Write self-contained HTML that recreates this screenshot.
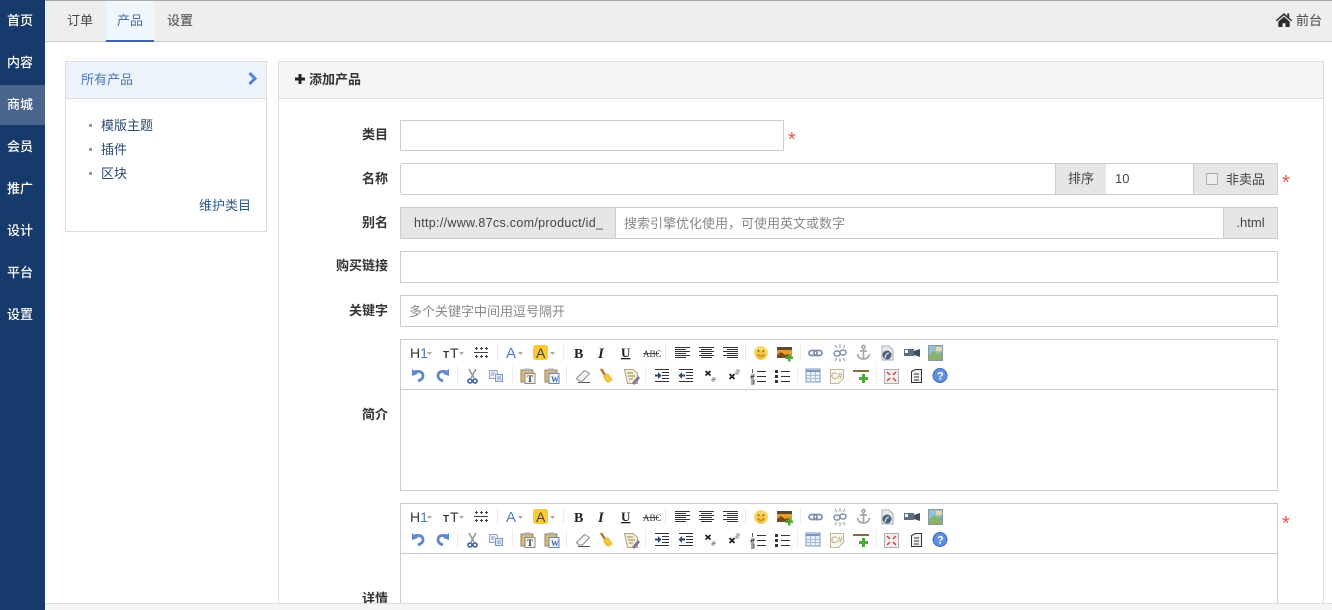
<!DOCTYPE html>
<html lang="zh"><head><meta charset="utf-8"><title>添加产品</title>
<style>
*{box-sizing:border-box}
html,body{margin:0;padding:0;width:1332px;height:610px;overflow:hidden;background:#fff}
body{font:13px/18px "Liberation Sans","Noto Sans CJK SC",sans-serif;color:#333;position:relative}
.a{position:absolute;white-space:nowrap}
#side{left:0;top:0;width:45px;height:610px;background:#173a6c}
.nav{position:absolute;left:0;width:45px;height:40px;line-height:42px;padding-left:7px;color:#fff;font-weight:500;font-size:13px}
#top{left:0;top:0;width:1332px;height:42px;background:#eee;border-top:1px solid #aaa;border-bottom:1px solid #ccc}
.lb{position:absolute;width:100px;left:288px;text-align:right;font-weight:bold;color:#333}
.box{position:absolute;background:#fff;border:1px solid #ccc}
.add{position:absolute;background:#e6e6e6;border:1px solid #ccc;text-align:center;color:#444}
.star{position:absolute;color:#e0584c;font-size:20px;font-weight:normal}
svg text{font-family:"Liberation Sans",sans-serif}
</style></head><body>
<div class="a" id="top"></div>
<div class="a" id="side"></div>
<div class="a" style="left:0;top:85px;width:45px;height:40px;background:#4b648c"></div>
<div class="nav" style="top:0">首页</div><div class="nav" style="top:42px">内容</div><div class="nav" style="top:84px">商城</div><div class="nav" style="top:126px">会员</div><div class="nav" style="top:168px">推广</div><div class="nav" style="top:210px">设计</div><div class="nav" style="top:252px">平台</div><div class="nav" style="top:294px">设置</div>

<div class="a" style="left:106px;top:1px;width:48px;height:41px;background:#eff6fc;border-bottom:2px solid #3a66a8"></div>
<div class="a" style="left:67px;top:12px;color:#444">订单</div>
<div class="a" style="left:117px;top:12px;color:#3d6fb0">产品</div>
<div class="a" style="left:167px;top:12px;color:#444">设置</div>
<svg class="a" style="left:1275px;top:12px" width="18" height="16" viewBox="0 0 18 16"><path fill="#2e2e2e" d="M9 1 .8 8.2l1 1.1L9 3.2l7.2 6.1 1-1.1-3-2.6V1.5h-2v2.6zM3.3 9.6V15h4.2v-3.8h3V15h4.2V9.6L9 4.6z"/></svg>
<div class="a" style="left:1296px;top:12px;color:#444">前台</div>

<div class="a" style="left:65px;top:61px;width:202px;height:171px;border:1px solid #ddd;background:#fff"></div>
<div class="a" style="left:66px;top:62px;width:200px;height:37px;background:#edf3fb;border-bottom:1px solid #ddd"></div>
<div class="a" style="left:81px;top:71px;color:#4a76c4">所有产品</div>
<svg class="a" style="left:247px;top:71px" width="12" height="15" viewBox="0 0 12 15"><path fill="none" stroke="#4f82d8" stroke-width="3" d="M2.500 2 8 7.500 2.500 13"/></svg>
<div class="a" style="left:89px;top:124px;width:3px;height:3px;background:#999"></div>
<div class="a" style="left:89px;top:148px;width:3px;height:3px;background:#999"></div>
<div class="a" style="left:89px;top:172px;width:3px;height:3px;background:#999"></div>
<div class="a" style="left:101px;top:117px;color:#2b4a70">模版主题</div>
<div class="a" style="left:101px;top:141px;color:#2b4a70">插件</div>
<div class="a" style="left:101px;top:165px;color:#2b4a70">区块</div>
<div class="a" style="left:199px;top:197px;color:#2b5a8a">维护类目</div>

<div class="a" style="left:278px;top:61px;width:1046px;height:560px;border:1px solid #ddd;background:#fff"></div>
<div class="a" style="left:279px;top:62px;width:1044px;height:37px;background:#f5f5f5;border-bottom:1px solid #ddd"></div>
<svg class="a" style="left:294px;top:73px" width="12" height="12" viewBox="0 0 12 12"><path fill="#222" d="M4.500 1h3v3.500H11v3H7.500V11h-3V7.500H1v-3h3.500z"/></svg>
<div class="a" style="left:309px;top:71px;font-weight:bold;color:#333">添加产品</div>

<div class="lb" style="top:126px">类目</div>
<div class="box" style="left:400px;top:120px;width:384px;height:31px"></div>
<div class="star" style="left:788px;top:131px">*</div>

<div class="lb" style="top:170px">名称</div>
<div class="box" style="left:400px;top:163px;width:656px;height:32px;border-radius:3px 0 0 3px"></div>
<div class="add" style="left:1055px;top:163px;width:52px;height:32px;line-height:30px">排序</div>
<div class="box" style="left:1106px;top:163px;width:88px;height:32px;line-height:30px;padding-left:9px;border-left:0;border-right:0;color:#444">10</div>
<div class="add" style="left:1193px;top:163px;width:85px;height:32px"></div>
<div class="a" style="left:1206px;top:173px;width:12px;height:12px;border:1px solid #aaa;border-radius:2px;background:#efefef"></div>
<div class="a" style="left:1226px;top:171px;color:#444">非卖品</div>
<div class="star" style="left:1282px;top:174px">*</div>

<div class="lb" style="top:214px">别名</div>
<div class="add" style="left:400px;top:207px;width:216px;height:32px;line-height:30px;letter-spacing:.3px;font-size:12.500px;text-align:left;padding-left:13px">http://www.87cs.com/product/id_</div>
<div class="box" style="left:615px;top:207px;width:609px;height:32px;line-height:32px;padding-left:8px;color:#888">搜索引擎优化使用，可使用英文或数字</div>
<div class="add" style="left:1223px;top:207px;width:55px;height:32px;line-height:30px">.html</div>

<div class="lb" style="top:257px">购买链接</div>
<div class="box" style="left:400px;top:251px;width:878px;height:32px"></div>

<div class="lb" style="top:302px">关键字</div>
<div class="box" style="left:400px;top:295px;width:878px;height:32px;line-height:32px;padding-left:8px;color:#888">多个关键字中间用逗号隔开</div>

<div class="lb" style="top:406px">简介</div>
<div class="box" style="left:400px;top:339px;width:878px;height:152px"></div>
<div class="a" style="left:401px;top:389px;width:876px;height:1px;background:#ccc"></div>

<div class="box" style="left:400px;top:503px;width:878px;height:130px"></div>
<div class="a" style="left:401px;top:553px;width:876px;height:1px;background:#ccc"></div>
<div class="star" style="left:1282px;top:515px">*</div>
<div class="lb" style="top:590px">详情</div>

<svg class="a" style="left:400px;top:339px" width="560" height="50" viewBox="0 0 560 50">
<defs>
<g id="tb">
<!-- separators -->
<path fill="none" stroke="#ececec" d="M97.500 5v17M163.500 5v17M265.500 5v17M345.500 5v17M400.500 5v17M57.500 27v17M112.500 27v17M166.500 27v17M245.500 27v17M397.500 27v17M476.500 27v17"/>
<!-- carets -->
<path fill="#aaa" d="M27 13h5l-2.500 3zM59 13h5l-2.500 3zM118 13h5l-2.500 3zM150 13h5l-2.500 3z"/>
<!-- grid -->
<path fill="none" stroke="#444" d="M74 13.500h14"/>
<path fill="none" stroke="#444" d="M75 9.500h3M80 9.500h3M85 9.500h3M75 17.500h3M80 17.500h3M85 17.500h3M76.500 8v3M81.500 8v3M86.500 8v3M76.500 16v3M81.500 16v3M86.500 16v3"/>
<rect x="133" y="6" width="15" height="15" rx="2.500" fill="#fbcb34"/>
<!-- ABC strike -->
<path stroke="#666" d="M243 14.500h16"/>
<!-- aligns -->
<g fill="none" stroke="#333"><path d="M275 8.500h15M275 10.500h11M275 12.500h15M275 14.500h11M275 16.500h15M275 18.500h11M299 8.500h15M301 10.500h11M299 12.500h15M301 14.500h11M299 16.500h15M301 18.500h11M323 8.500h15M327 10.500h11M323 12.500h15M327 14.500h11M323 16.500h15M327 18.500h11"/></g>
<!-- smile -->
<circle cx="361" cy="14" r="7" fill="#f8d766"/><circle cx="361" cy="16" r="4.500" fill="#f5c445"/><circle cx="358.500" cy="12" r="1" fill="#8a6a1a"/><circle cx="363.500" cy="12" r="1" fill="#8a6a1a"/><path d="M357.500 15.500q3.500 3.500 7 0" fill="none" stroke="#a8781a"/>
<!-- emoticon image -->
<rect x="377" y="8" width="15" height="3" fill="#5c4a2a"/><rect x="377" y="11" width="15" height="8" fill="#e89a2a"/><path d="M377 19v-3l4-3 4 3 3-1v4z" fill="#7a4a18"/><path d="M388 15h2.500v2.500H393V20h-2.500v2.500H388V20h-2.500v-2.500H388z" fill="#4fa83a"/>
<!-- link -->
<g fill="none" stroke="#7d8fa8" stroke-width="1.800"><rect x="409" y="11.500" width="8" height="5" rx="2.500"/><rect x="414" y="11.500" width="8" height="5" rx="2.500"/></g>
<!-- unlink -->
<g fill="none" stroke="#7d8fa8" stroke-width="1.500"><rect x="434" y="12" width="6" height="5" rx="2.500"/><rect x="440" y="11" width="6" height="5" rx="2.500"/></g>
<path fill="none" stroke="#8a94a0" d="M435 6l2 3M440 5v4M445 6l-2 3M435 22l2-3M440 23v-4M445 22l-2-3"/>
<!-- anchor -->
<g fill="none" stroke="#a4a8ac" stroke-width="1.700"><circle cx="463.500" cy="8" r="1.500"/><path d="M463.500 10v10M460 12h7M457.500 15q1 5 6 5 5 0 6-5"/></g>
<!-- flash -->
<path d="M482 7h7l4 4v10h-11z" fill="#e8eaec" stroke="#a4acb4"/><circle cx="487" cy="16" r="4.500" fill="#4d627c"/><path d="M485 19q1-5 4-5" stroke="#fff" fill="none"/>
<!-- video -->
<path d="M504 10h10v7h-10z" fill="#5c6f80"/><path d="M514 12l6-2v8l-6-2z" fill="#3f4e5c"/><rect x="505" y="11" width="3" height="3" fill="#fff"/>
<!-- image -->
<rect x="528.500" y="6.500" width="14" height="15" fill="#8fc1da" stroke="#8a98a4"/><path d="M529 21v-5l5-4 4 3 4-2v8z" fill="#8ab36a"/><rect x="536" y="8" width="6" height="4" fill="#e6d9a0"/>

<!-- ROW 2 undo/redo -->
<g fill="none" stroke="#6288cc" stroke-width="2.800"><path d="M14 33q8-2 9 3 .5 4-5 6"/><path d="M47 33q-8-2-9 3-.5 4 5 6"/></g>
<path fill="#6288cc" d="M12 30v7l6-2zM49 30v7l-6-2z"/>
<!-- cut -->
<path fill="none" stroke="#8a94a4" stroke-width="1.500" d="M69 30l5 9M76 30l-5 9"/><g fill="none" stroke="#4f6ba8" stroke-width="1.800"><circle cx="70" cy="42" r="2"/><circle cx="75" cy="42" r="2"/></g>
<!-- copy -->
<path d="M89.500 31.500h7l1 1v7h-8z" fill="#eef3fb" stroke="#8aa4d0"/><path d="M95.500 35.500h7v7h-7z" fill="#dfe9f7" stroke="#7e9ac8"/><path d="M91 34h4M91 36h3M97 38h4M97 40h4" stroke="#7e9ac8"/>
<!-- paste T/W -->
<rect x="121" y="31" width="12" height="12" fill="#d9b878" stroke="#9a8250"/><rect x="124" y="29.500" width="6" height="3" fill="#b0b0b0"/><rect x="125" y="34.500" width="10" height="10" fill="#f4f4f4" stroke="#888"/>
<rect x="145" y="31" width="12" height="12" fill="#d9b878" stroke="#9a8250"/><rect x="148" y="29.500" width="6" height="3" fill="#b0b0b0"/><rect x="149" y="34.500" width="10" height="10" fill="#f0f4fb" stroke="#6a86c0"/>
<!-- eraser -->
<path d="M176.500 39.500l8-8 5 3-7 7.500h-3.500z" fill="#f6f6f6" stroke="#8a8a8a"/><path d="M178 43.500h12" stroke="#555"/>
<!-- brush -->
<path d="M201 30l4 6" stroke="#b8701e" stroke-width="2.400"/><path d="M203 37l5-3 5 7-5 3q-4-2-5-7z" fill="#f0c63e"/>
<!-- format -->
<path d="M224.500 30.500h9l4 4v10h-10z" fill="#f8efc8" stroke="#a8a490"/><path d="M227 34h6M228 37h7M229 40h4" stroke="#8a8a7a"/><path d="M232 44l6-7 2 2-6 7z" fill="#8070a8"/>
<!-- indent / outdent -->
<path fill="none" stroke="#333" d="M255 30.500h14M262 33.500h7M262 36.500h7M262 39.500h7M255 42.500h14M279 30.500h14M286 33.500h7M286 36.500h7M286 39.500h7M279 42.500h14"/>
<path fill="#2a4a70" d="M255 35.500h3v-2.500l3.500 3.500-3.500 3.500v-2.500h-3zM285 35.500h-3v-2.500l-3.500 3.500 3.500 3.500v-2.500h3z"/>
<!-- sub/sup -->
<path fill="none" stroke="#222" stroke-width="1.800" d="M305.500 32l5 4.500M310.500 32l-5 4.500M329.500 35l5 5M334.500 35l-5 5"/>
<path fill="none" stroke="#888" d="M312 39h3v1.500h-3V42h3M336 31h3v2h-3v2h3"/>
<!-- ol/ul -->
<path fill="none" stroke="#333" d="M357 32.500h9M357 37.500h9M357 42.500h9M381 32.500h9M381 37.500h9M381 42.500h9"/>
<path fill="none" stroke="#444" stroke-width=".9" d="M352.500 30v4M351 36h3v1.500h-3V39h3M351 41h3v4h-3M351 43h3"/>
<path fill="#333" d="M375 31h3v3h-3zM375 36h3v3h-3zM375 41h3v3h-3z"/>
<!-- table -->
<rect x="406" y="30" width="14" height="13" fill="#e8f0fa" stroke="#7a98c0"/><path d="M406.500 32h13" stroke="#7a98c0" stroke-width="2"/><path d="M406 36.500h14M406 39.500h14M410.500 33v10M415.500 33v10" stroke="#a8bdd8"/>
<!-- code -->
<path d="M430.500 30.500h13v9l-5 5h-8z" fill="#faf7ee" stroke="#c0b898"/>
<!-- hr -->
<path d="M453 32h16" stroke="#8a6a3a" stroke-width="2"/><path d="M459 38h3v-3h3v3h3v3h-3v3h-3v-3h-3z" fill="#4fa83a"/>
<!-- fullscreen -->
<rect x="484.500" y="30.500" width="14" height="14" fill="#f6ecec" stroke="#b0b0b0"/><path d="M487 33l3 3M496 33l-3 3M487 42l3-3M496 42l-3-3" stroke="#c44" stroke-width="1.500"/>
<!-- source -->
<path d="M511.500 32.500l4-2h6v13h-10z" fill="#f0f0f0" stroke="#333"/><path d="M514 35h5M514 38h5M514 41h5" stroke="#333"/>
<!-- help -->
<circle cx="540" cy="36.500" r="7" fill="#5f8fe0" stroke="#3d6bb8"/>
</g>
</defs>
<use href="#tb"/>
<text x="10" y="19" font-size="14" fill="#333">H<tspan fill="#4a76b8">1</tspan></text>
<text x="43" y="19" font-size="10" fill="#333" font-weight="bold">T</text><text x="50" y="19" font-size="14" fill="#333">T</text>
<text x="106" y="19" font-size="15" fill="#4a7fc8">A</text>
<text x="136" y="19" font-size="14" fill="#444">A</text>
<text x="174" y="19" font-size="14" font-weight="bold" fill="#222" style="font-family:'Liberation Serif',serif">B</text>
<text x="198" y="19" font-size="15" font-weight="bold" font-style="italic" fill="#222" style="font-family:'Liberation Serif',serif">I</text>
<text x="221" y="18" font-size="13" font-weight="bold" fill="#222" text-decoration="underline" style="font-family:'Liberation Serif',serif">U</text>
<text x="243" y="18" font-size="9" fill="#333" style="font-family:'Liberation Serif',serif">ABC</text>
<text x="127" y="43" font-size="9" font-weight="bold" fill="#333" style="font-family:'Liberation Serif',serif">T</text>
<text x="151" y="43" font-size="8" font-weight="bold" fill="#3a5fb0" style="font-family:'Liberation Serif',serif">W</text>
<text x="431" y="40" font-size="9" fill="#a89a70">C#</text>
<text x="537" y="40.500" font-size="11" font-weight="bold" fill="#fff">?</text>
</svg>

<svg class="a" style="left:400px;top:503px" width="560" height="50" viewBox="0 0 560 50">
<use href="#tb"/>
<text x="10" y="19" font-size="14" fill="#333">H<tspan fill="#4a76b8">1</tspan></text>
<text x="43" y="19" font-size="10" fill="#333" font-weight="bold">T</text><text x="50" y="19" font-size="14" fill="#333">T</text>
<text x="106" y="19" font-size="15" fill="#4a7fc8">A</text>
<text x="136" y="19" font-size="14" fill="#444">A</text>
<text x="174" y="19" font-size="14" font-weight="bold" fill="#222" style="font-family:'Liberation Serif',serif">B</text>
<text x="198" y="19" font-size="15" font-weight="bold" font-style="italic" fill="#222" style="font-family:'Liberation Serif',serif">I</text>
<text x="221" y="18" font-size="13" font-weight="bold" fill="#222" text-decoration="underline" style="font-family:'Liberation Serif',serif">U</text>
<text x="243" y="18" font-size="9" fill="#333" style="font-family:'Liberation Serif',serif">ABC</text>
<text x="127" y="43" font-size="9" font-weight="bold" fill="#333" style="font-family:'Liberation Serif',serif">T</text>
<text x="151" y="43" font-size="8" font-weight="bold" fill="#3a5fb0" style="font-family:'Liberation Serif',serif">W</text>
<text x="431" y="40" font-size="9" fill="#a89a70">C#</text>
<text x="537" y="40.500" font-size="11" font-weight="bold" fill="#fff">?</text>
</svg>

<div class="a" style="left:45px;top:603px;width:1287px;height:7px;background:#f5f5f5;border-top:1px solid #ddd"></div>
</body></html>
